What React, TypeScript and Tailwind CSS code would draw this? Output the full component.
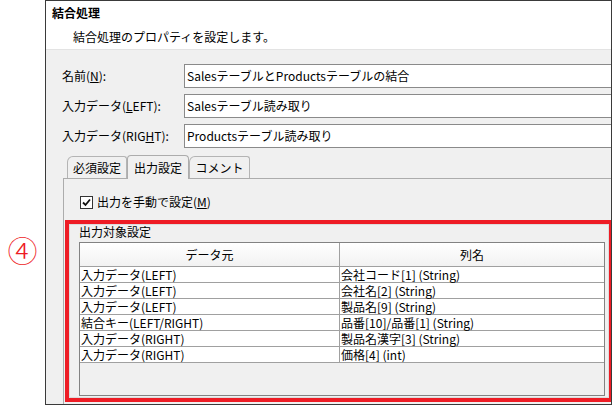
import React from "react";

const font = { fontFamily: '"Noto Sans CJK JP", "Noto Sans", sans-serif' };

type Row = { src: string; col: string };

const rows: Row[] = [
  { src: "入力データ(LEFT)", col: "会社コード[1] (String)" },
  { src: "入力データ(LEFT)", col: "会社名[2] (String)" },
  { src: "入力データ(LEFT)", col: "製品名[9] (String)" },
  { src: "結合キー(LEFT/RIGHT)", col: "品番[10]/品番[1] (String)" },
  { src: "入力データ(RIGHT)", col: "製品名漢字[3] (String)" },
  { src: "入力データ(RIGHT)", col: "価格[4] (int)" },
];

function Field({ label, value }: { label: React.ReactNode; value: string }) {
  return (
    <div className="flex items-center h-[24px]">
      <div className="w-[122px] text-[12px] leading-[16px] text-black">{label}</div>
      <div className="flex-1 h-[24px] -mr-[2px] bg-white border border-[#8a8a8a] flex items-center pl-[2px] text-[12px] leading-[16px] text-black">
        {value}
      </div>
    </div>
  );
}

function Tab({ label, active, w }: { label: string; active?: boolean; w: string }) {
  return (
    <div
      className={
        active
          ? `${w} h-[24px] -mb-px relative z-10 bg-[#f0f0f0] border border-b-0 border-[#acacac] rounded-t-[4px] flex items-center justify-center text-[12px] leading-[16px]`
          : `${w} h-[22px] bg-[#f0f0f0] border border-b-0 border-[#b4b4b4] rounded-tl-[6px] rounded-tr-[3px] flex items-center justify-center text-[12px] leading-[16px]`
      }
    >
      {label}
    </div>
  );
}

export default function App() {
  return (
    <div className="w-[616px] h-[406px] bg-white flex overflow-hidden text-black" style={font}>
      {/* step marker */}
      <div className="w-[45px] shrink-0 flex justify-center pt-[232px]">
        <span className="text-[#ee1c25] text-[30px] leading-[34px] font-light">④</span>
      </div>

      {/* dialog */}
      <div className="w-[567px] h-[405px] shrink-0 border border-[#3a3a3a] flex flex-col overflow-hidden">
        <div className="h-[49px] shrink-0 bg-white border-b border-[#e3e3e3] pt-[4px]">
          <div className="pl-[6px] text-[12px] leading-[16px] font-bold">結合処理</div>
          <div className="pl-[27px] mt-[8px] text-[12px] leading-[16px]">結合処理のプロパティを設定します。</div>
        </div>

        <div className="flex-1 bg-[#f0f0f0] flex flex-col pt-[14px]">
          <div className="pl-[16px] flex flex-col gap-[6px]">
            <Field
              label={
                <>
                  名前(<span className="underline">N</span>):
                </>
              }
              value="SalesテーブルとProductsテーブルの結合"
            />
            <Field
              label={
                <>
                  入力データ(<span className="underline">L</span>EFT):
                </>
              }
              value="Salesテーブル読み取り"
            />
            <Field
              label={
                <>
                  入力データ(RIG<span className="underline">H</span>T):
                </>
              }
              value="Productsテーブル読み取り"
            />
          </div>

          <div className="ml-[17px] mt-[5px] flex-1 flex flex-col">
            <div className="flex items-end h-[25px] pl-[4px]">
              <Tab label="必須設定" w="w-[60px]" />
              <Tab label="出力設定" w="w-[62px]" active />
              <Tab label="コメント" w="w-[61px]" />
            </div>
            <div className="flex-1 -mr-[4px] border-t border-l border-[#acacac] flex flex-col pl-[1px] pb-[2px]">
              <div className="flex items-center h-[14px] mt-[16px] ml-[15px]">
                <div className="w-[13px] h-[13px] border border-[#333] bg-white flex items-center justify-center">
                  <svg width="9" height="9" viewBox="0 0 9 9">
                    <path d="M1 4.5 L3.5 7 L8 1.5" fill="none" stroke="#111" strokeWidth="1.8" />
                  </svg>
                </div>
                <span className="ml-[4px] text-[12px] leading-[16px]">
                  出力を手動で設定(<span className="underline">M</span>)
                </span>
              </div>

              {/* highlighted output group */}
              <div className="mt-[11px] mr-[2px] flex-1 border-[4px] border-[#ee1c25] flex flex-col">
                <div className="flex-1 border border-[#dcdcdc] flex flex-col pl-[9px] pr-[3px] pb-[1px]">
                  <div className="text-[12px] leading-[16px] mt-[-1px] h-[18px]">出力対象設定</div>
                  <div className="flex-1 border border-[#828282] bg-[#f0f0f0] flex flex-col">
                    <div className="flex h-[24px] border-b border-[#a0a0a0] bg-gradient-to-b from-white to-[#f2f2f2]">
                      <div className="w-[260px] border-r border-[#a0a0a0] flex items-center justify-center text-[12px] leading-[16px]">
                        データ元
                      </div>
                      <div className="flex-1 flex items-center justify-center text-[12px] leading-[16px]">列名</div>
                    </div>
                    {rows.map((r, i) => (
                      <div key={i} className="flex h-[16px] bg-white border-b border-[#a0a0a0]">
                        <div className="w-[260px] border-r border-[#a0a0a0] pl-[1px] text-[12px] leading-[15px] whitespace-nowrap">
                          {r.src}
                        </div>
                        <div className="flex-1 pl-[1px] text-[12px] leading-[15px] whitespace-nowrap">{r.col}</div>
                      </div>
                    ))}
                  </div>
                </div>
              </div>
            </div>
          </div>
        </div>
      </div>
    </div>
  );
}
